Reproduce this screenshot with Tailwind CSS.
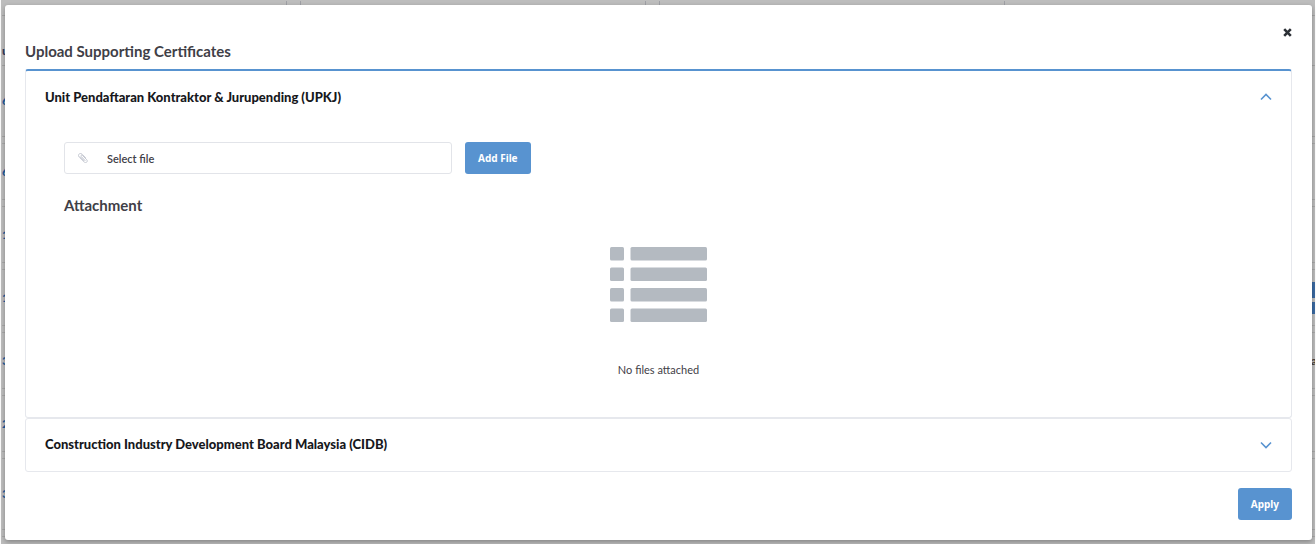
<!DOCTYPE html>
<html lang="en">
<head>
<meta charset="utf-8">
<meta name="viewport" content="width=device-width, initial-scale=1">
<title>Upload Supporting Certificates</title>
<script src="https://cdn.jsdelivr.net/npm/@tailwindcss/browser@4"></script>
</head>
<body class="relative min-h-screen bg-white font-['Lato',sans-serif] text-[#3f4047]">

<!-- Page behind the dialog, dimmed -->
<div class="absolute inset-0 mr-px flex flex-col overflow-hidden border-l border-[#fafafa] bg-[#bdbdbd] pl-px text-xs font-black text-[#1f5c9e]" inert>
  <div class="mt-px mb-2.5 flex h-1 shrink-0">
    <div class="w-[285px] border-r border-[#9fa0a5]"></div>
    <div class="ml-[13px] w-[346px] border-x border-[#9fa0a5]"></div>
    <div class="ml-[13px] w-[346px] border-x border-[#9fa0a5]"></div>
  </div>
  <div class="flex flex-col gap-1.5">
    <div class="flex flex-col">
      <div class="flex h-[51px] items-center border-y border-[#a5a5a5] pt-5 text-[#343a60]">u</div>
      <div class="flex h-[71px] items-center border-b border-[#a5a5a5]">6</div>
    </div>
    <div class="flex h-[57px] items-center border-y border-[#a9a9a9]">6</div>
    <div class="flex h-[57px] items-center border-y border-[#a9a9a9]">1</div>
    <div class="flex h-[57px] items-center justify-between border-y border-[#a9a9a9]">1
      <div class="flex w-1 flex-col gap-1"><span class="h-4 bg-[#3a6aa3]"></span><span class="h-3 bg-[#3a6aa3]"></span></div>
    </div>
    <div class="flex h-[57px] items-center justify-between border-y border-[#a9a9a9]">3<span class="w-1 overflow-hidden text-[#4c443c]">a</span></div>
    <div class="flex h-[57px] items-center border-y border-[#a9a9a9]">2</div>
    <div class="flex h-[72px] items-center border-y border-[#a9a9a9]">3</div>
    <div class="h-14 border-y border-[#a9a9a9]"></div>
  </div>
</div>

<div class="relative pt-[5px] pr-1 pb-1 pl-[5px]">
  <main role="dialog" aria-modal="true" aria-labelledby="dialog-title" class="rounded-[3px] bg-white px-5 pb-5 shadow-[0_2px_5px_rgba(0,0,0,0.3)]">
    <div class="flex justify-end pt-[21px]">
      <button type="button" aria-label="Close" class="flex h-3 w-[9px] items-center justify-center text-[#2c3036]">
        <svg class="h-[9px] w-[9px]" viewBox="0 0 9 9" fill="none" stroke="currentColor" stroke-width="2.6"><path d="M1.2 1.2 7.8 7.8M7.8 1.2 1.2 7.8"/></svg>
      </button>
    </div>
    <h1 id="dialog-title" class="pt-0.5 pb-[7px] text-[15px] leading-[22px] font-bold">Upload Supporting Certificates</h1>

    <section class="rounded-[3px] border border-t-2 border-[#e6e8ed] border-t-[#5893d0]">
      <h2>
        <button type="button" aria-expanded="true" aria-controls="upkj" class="flex h-[53px] w-full items-center justify-between px-[19px] text-left text-[13px] font-black text-[#17181c]">
          Unit Pendaftaran Kontraktor &amp; Jurupending (UPKJ)
          <svg class="h-2.5 w-3 text-[#5893d0]" viewBox="0 0 12 10" fill="none" stroke="currentColor" stroke-width="1.6"><path d="M1 6.500 6 1.500l5 5"/></svg>
        </button>
      </h2>
      <div id="upkj" class="px-[38px] pt-[18px] pb-[39px]">
        <form class="flex gap-[13px]">
          <div class="grid w-full max-w-[388px] items-center">
            <svg class="pointer-events-none col-start-1 row-start-1 ml-3.5 h-2.5 w-2.5 text-[#c3c6d0]" viewBox="0 0 10 10" fill="none" stroke="currentColor" stroke-width="1" stroke-linecap="round" stroke-linejoin="round"><path d="M7 7.5 3.3 3.600c-.9-.9.4-2.100 1.200-1.200l4.200 4.300c1.600 1.700-.7 4-2.400 2.300L1.200 4C-.8 1.900 1.900-.8 4 1.200l3.400 3.400M5.800 7.600 2.300 4"/></svg>
            <input type="text" readonly aria-label="Select file" value="Select file" class="col-start-1 row-start-1 h-8 w-full rounded-[3px] border border-[#e2e4e9] bg-transparent pl-[42px] text-[11px] font-semibold text-[#3f4047]">
          </div>
          <button type="button" class="h-8 shrink-0 rounded-[3px] bg-[#5893d0] px-[13px] font-['Noto_Sans',sans-serif] text-[10px] font-bold text-white">Add File</button>
        </form>
        <h3 class="pt-5 text-[15px] leading-[22px] font-bold">Attachment</h3>
        <div class="flex flex-col items-center pt-[31px]">
          <svg class="h-[77px] w-[97px] text-[#b4bac1]" viewBox="0 0 97 77" fill="currentColor" aria-hidden="true">
            <rect x="0" y="0" width="14" height="13.500" rx="1.5"/><rect x="20.500" y="0" width="76.500" height="13.500" rx="1.5"/>
            <rect x="0" y="20.500" width="14" height="13.500" rx="1.5"/><rect x="20.500" y="20.500" width="76.500" height="13.500" rx="1.5"/>
            <rect x="0" y="41" width="14" height="13.500" rx="1.5"/><rect x="20.500" y="41" width="76.500" height="13.500" rx="1.5"/>
            <rect x="0" y="61.500" width="14" height="13.500" rx="1.5"/><rect x="20.500" y="61.500" width="76.500" height="13.500" rx="1.5"/>
          </svg>
          <p class="pt-[38px] text-[11px] leading-4">No files attached</p>
        </div>
      </div>
    </section>
    <section class="rounded-[3px] border border-[#e6e8ed]">
      <h2>
        <button type="button" aria-expanded="false" class="flex h-[52px] w-full items-center justify-between px-[19px] text-left text-[13px] font-black text-[#17181c]">
          Construction Industry Development Board Malaysia (CIDB)
          <svg class="h-2.5 w-3 text-[#5893d0]" viewBox="0 0 12 10" fill="none" stroke="currentColor" stroke-width="1.6"><path d="m1 2.500 5 5 5-5"/></svg>
        </button>
      </h2>
    </section>
    <div class="flex justify-end pt-4">
      <button type="button" class="h-8 rounded-[3px] bg-[#5893d0] px-[13px] font-['Noto_Sans',sans-serif] text-[10px] font-bold text-white">Apply</button>
    </div>
  </main>
</div>
</body>
</html>
